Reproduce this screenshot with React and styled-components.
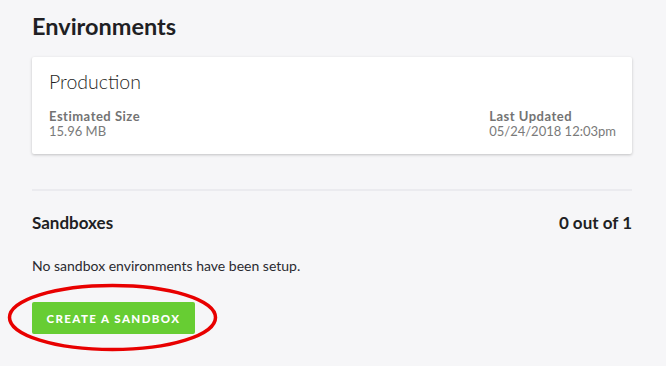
import React from 'react';
import styled, { createGlobalStyle } from 'styled-components';

const GlobalStyle = createGlobalStyle`
    html, body, #root {
        min-height: 100%;
        height: 100%;
    }
    body {
        margin: 0;
        background: #f6f6f8;
        font-family: Lato, "Liberation Sans", sans-serif;
        color: #1f1f24;
    }
`;

const Page = styled.div`
    box-sizing: border-box;
    width: 664px;
    min-height: 100%;
    padding: 12px 32px 0;
`;

const Title = styled.h1`
    margin: 0;
    font-size: 23.5px;
    font-weight: 700;
    line-height: 28px;
    color: #1f1f24;
`;

const Card = styled.div`
    margin-top: 17px;
    background: #fff;
    box-shadow: 0 1px 3px rgba(0, 0, 0, 0.22);
    border-radius: 2px;
    padding: 13px 16px 15px 17px;
`;

const CardName = styled.div`
    font-size: 19.5px;
    font-weight: 300;
    line-height: 24px;
    color: #1f1f24;
`;

const Stats = styled.div`
    display: flex;
    justify-content: space-between;
    margin-top: 15px;
`;

const Stat = styled.div`
    display: flex;
    flex-direction: column;
`;

const StatLabel = styled.span`
    font-size: 13px;
    font-weight: 700;
    letter-spacing: 0.5px;
    line-height: 15px;
    color: #737373;
`;

const StatValue = styled.span`
    font-size: 13px;
    line-height: 15px;
    color: #7a7a7a;
`;

const Divider = styled.hr`
    margin: 35px 0 0;
    border: 0;
    height: 2px;
    background: #ebebef;
`;

const SectionHead = styled.div`
    display: flex;
    justify-content: space-between;
    align-items: baseline;
    margin-top: 22px;
    font-size: 17px;
    font-weight: 700;
    line-height: 20px;
`;

const Empty = styled.p`
    margin: 24px 0 0;
    font-size: 14px;
    line-height: 18px;
    color: #2a2a30;
`;

const ButtonWrap = styled.div`
    position: relative;
    display: inline-block;
    margin-top: 27px;
`;

const Button = styled.button`
    display: block;
    width: 163px;
    height: 32px;
    border: 0;
    border-radius: 2px;
    background: #67cd33;
    color: #fff;
    font-family: Lato, "Liberation Sans", sans-serif;
    font-size: 11.5px;
    font-weight: 900;
    letter-spacing: 1.4px;
    cursor: pointer;
`;

const Circle = styled.svg`
    position: absolute;
    left: -26px;
    top: -19px;
    overflow: visible;
    pointer-events: none;
`;

export default function App() {
    return (
        <>
            <GlobalStyle />
            <Page>
                <Title>Environments</Title>

                <Card>
                    <CardName>Production</CardName>
                    <Stats>
                        <Stat>
                            <StatLabel>Estimated Size</StatLabel>
                            <StatValue>15.96 MB</StatValue>
                        </Stat>
                        <Stat>
                            <StatLabel>Last Updated</StatLabel>
                            <StatValue>05/24/2018 12:03pm</StatValue>
                        </Stat>
                    </Stats>
                </Card>

                <Divider />

                <SectionHead>
                    <span>Sandboxes</span>
                    <span>0 out of 1</span>
                </SectionHead>

                <Empty>No sandbox environments have been setup.</Empty>

                <ButtonWrap>
                    <Button>CREATE A SANDBOX</Button>
                    <Circle width="214" height="70" viewBox="0 0 214 70">
                        <ellipse cx="106.5" cy="34.5" rx="103" ry="32"
                            fill="none" stroke="#e80000" strokeWidth="3.5" />
                    </Circle>
                </ButtonWrap>
            </Page>
        </>
    );
}
